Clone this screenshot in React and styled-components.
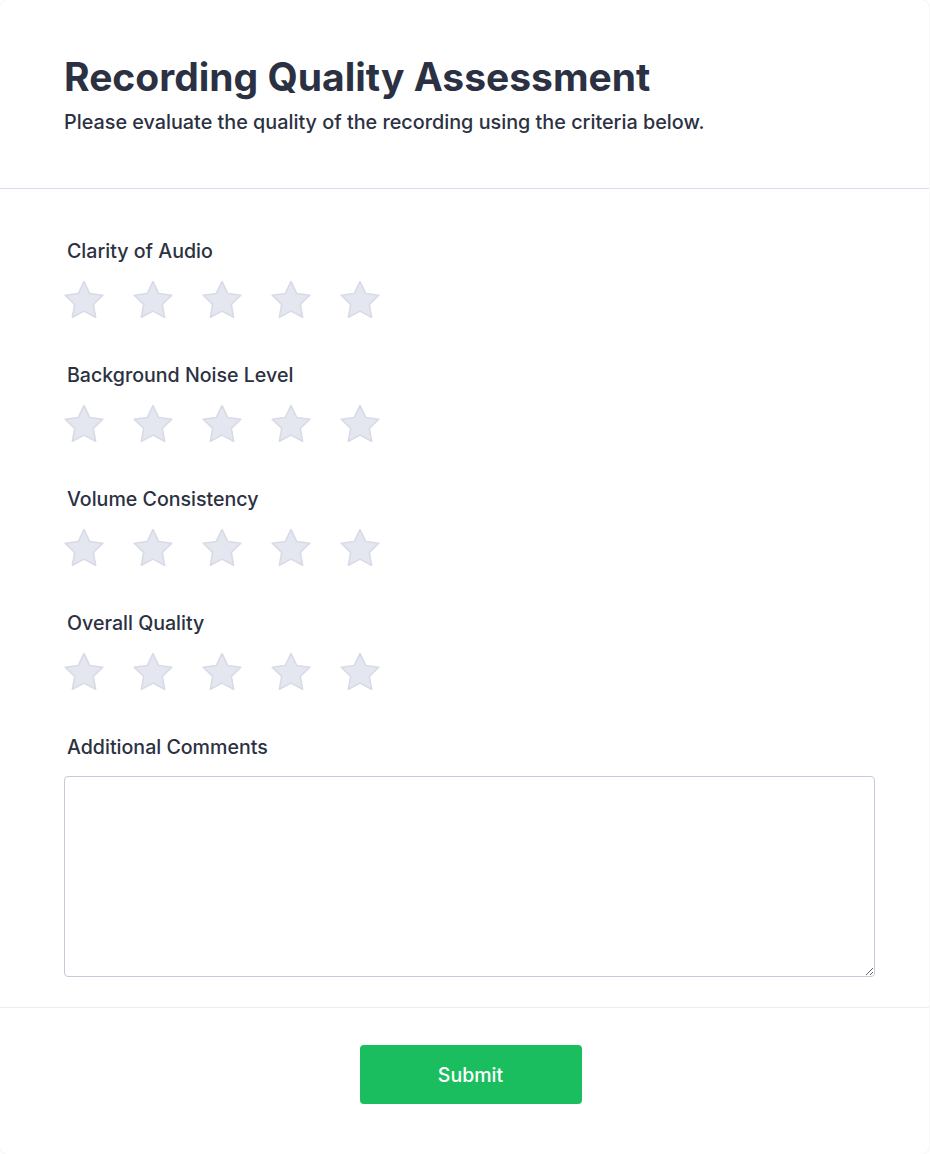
import React, { useState } from 'react';
import styled, { createGlobalStyle } from 'styled-components';

const GlobalStyle = createGlobalStyle`
    * { box-sizing: border-box; }
    body {
        margin: 0;
        background: #ffffff;
        font-family: Inter, "Noto Sans", sans-serif;
        color: #2b3142;
    }
`;

const criteria = [
    'Clarity of Audio',
    'Background Noise Level',
    'Volume Consistency',
    'Overall Quality'
];

function Star({ filled }) {
    return (
        <svg width="40" height="40" viewBox="2.1 1.8 19.8 19.8">
            <path
                d="M12 2.6l2.85 5.9 6.45.85-4.7 4.5 1.15 6.4L12 17.2l-5.75 3.05 1.15-6.4-4.7-4.5 6.45-.85z"
                fill={filled ? '#f5b301' : '#e5e7f0'}
                stroke={filled ? '#e0a200' : '#d8dbe6'}
                strokeWidth="0.8"
                strokeLinejoin="round"
            />
        </svg>
    );
}

function Assessment() {
    const [ratings, setRatings] = useState({});
    const [comment, setComment] = useState('');

    return (
        <Card>
            <Header>
                <h1>Recording Quality Assessment</h1>
                <p>Please evaluate the quality of the recording using the criteria below.</p>
            </Header>
            <Body>
                {criteria.map((name) => (
                    <Field key={name}>
                        <Label>{name}</Label>
                        <Stars>
                            {[1, 2, 3, 4, 5].map((n) => (
                                <StarButton
                                    key={n}
                                    onClick={() => setRatings({ ...ratings, [name]: n })}
                                >
                                    <Star filled={ratings[name] >= n} />
                                </StarButton>
                            ))}
                        </Stars>
                    </Field>
                ))}
                <Field>
                    <Label>Additional Comments</Label>
                    <Comments
                        value={comment}
                        onChange={(e) => setComment(e.target.value)}
                    />
                </Field>
            </Body>
            <Footer>
                <SubmitButton>Submit</SubmitButton>
            </Footer>
        </Card>
    );
}

const Card = styled.div`
    width: 929px;
    min-height: 1154px;
    background: #ffffff;
    border-radius: 8px;
    box-shadow: 0 0 2px rgba(40, 44, 70, 0.12);
`;

const Header = styled.div`
    padding: 53px 54px 53px 64px;
    border-bottom: 1px solid #dcdcee;
    h1 {
        margin: 0;
        font-size: 39px;
        font-weight: 700;
        line-height: 48px;
        color: #2b3142;
    }
    p {
        margin: 8px 0 0;
        font-size: 19.8px;
        font-weight: 500;
        line-height: 26px;
        color: #2b3142;
    }
`;

const Body = styled.div`
    padding: 49px 54px 30px 64px;
    border-bottom: 1px solid #ececf2;
    display: flex;
    flex-direction: column;
    gap: 42px;
`;

const Field = styled.div`
    display: flex;
    flex-direction: column;
    gap: 16px;
`;

const Label = styled.label`
    padding-left: 3px;
    font-size: 19.6px;
    font-weight: 500;
    line-height: 26px;
    color: #2b3142;
`;

const Stars = styled.div`
    display: flex;
    gap: 29px;
`;

const StarButton = styled.button`
    width: 40px;
    height: 40px;
    padding: 0;
    border: none;
    background: none;
    cursor: pointer;
    svg {
        display: block;
    }
`;

const Comments = styled.textarea`
    width: 100%;
    height: 201px;
    border: 1px solid #c8c8da;
    border-radius: 4px;
    padding: 10px 12px;
    font-family: inherit;
    font-size: 16px;
    resize: vertical;
    outline: none;
`;

const Footer = styled.div`
    display: flex;
    justify-content: center;
    padding: 37px 54px 50px 66px;
`;

const SubmitButton = styled.button`
    width: 222px;
    height: 59px;
    border: none;
    border-radius: 4px;
    background: #1abe5e;
    color: #ffffff;
    font-family: inherit;
    font-size: 19.5px;
    font-weight: 500;
    cursor: pointer;
`;

export default function App() {
    return (
        <>
            <GlobalStyle />
            <Assessment />
        </>
    );
}
